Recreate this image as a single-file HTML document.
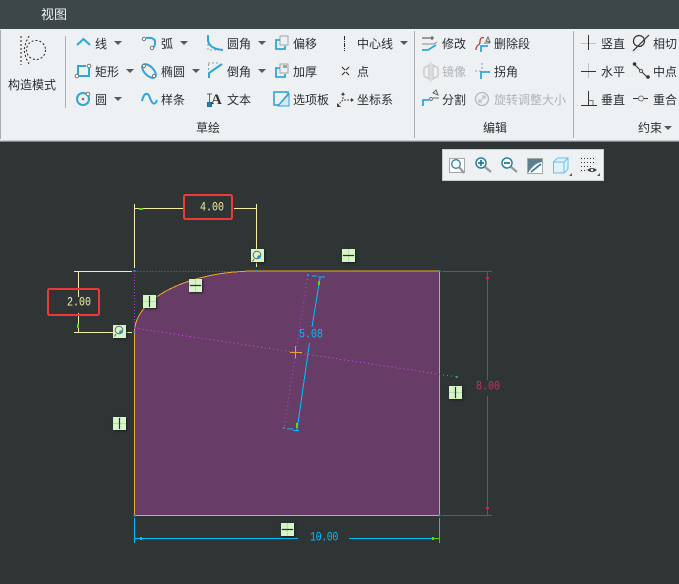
<!DOCTYPE html>
<html><head><meta charset="utf-8">
<style>
html,body{margin:0;padding:0;width:679px;height:584px;overflow:hidden;background:#2f3535}
body{position:relative;font-family:"Liberation Sans","Noto Sans CJK SC",sans-serif}
.t{position:absolute;font-size:12px;line-height:14px;color:#2b2f31;white-space:nowrap;letter-spacing:0}
.g{color:#b0b4b6}
svg{position:absolute;left:0;top:0}
.tag{position:absolute;width:13px;height:13px;background:#d6f6c8;box-shadow:1px 1px 2px #1a1f1f}
.d{font-family:"Liberation Mono",monospace;font-size:10px;letter-spacing:0;transform:scaleY(1.3);transform-origin:left center}
</style></head><body>
<div style="position:absolute;left:0;top:0;width:679px;height:29px;background:#3d4648"></div>
<div style="position:absolute;left:0;top:29px;width:679px;height:112px;background:#eef1f3"></div>
<div style="position:absolute;left:0;top:141px;width:679px;height:1px;background:#80888a"></div>
<div class="t" style="left:41px;top:8px;font-size:13px;color:#f2f4f4">视图</div>

<div class="t" style="left:8px;top:78px">构造模式</div>
<div class="t" style="left:95px;top:37px">线</div>
<div class="t" style="left:95px;top:65px">矩形</div>
<div class="t" style="left:95px;top:93px">圆</div>
<div class="t" style="left:161px;top:37px">弧</div>
<div class="t" style="left:161px;top:65px">椭圆</div>
<div class="t" style="left:161px;top:93px">样条</div>
<div class="t" style="left:227px;top:37px">圆角</div>
<div class="t" style="left:227px;top:65px">倒角</div>
<div class="t" style="left:227px;top:93px">文本</div>
<div class="t" style="left:293px;top:37px">偏移</div>
<div class="t" style="left:293px;top:65px">加厚</div>
<div class="t" style="left:293px;top:93px">选项板</div>
<div class="t" style="left:357px;top:37px">中心线</div>
<div class="t" style="left:357px;top:65px">点</div>
<div class="t" style="left:357px;top:93px">坐标系</div>
<div class="t" style="left:442px;top:37px">修改</div>
<div class="t g" style="left:442px;top:65px">镜像</div>
<div class="t" style="left:442px;top:93px">分割</div>
<div class="t" style="left:494px;top:37px">删除段</div>
<div class="t" style="left:494px;top:65px">拐角</div>
<div class="t g" style="left:494px;top:93px">旋转调整大小</div>
<div class="t" style="left:601px;top:37px">竖直</div>
<div class="t" style="left:601px;top:65px">水平</div>
<div class="t" style="left:601px;top:93px">垂直</div>
<div class="t" style="left:653px;top:37px">相切</div>
<div class="t" style="left:653px;top:65px">中点</div>
<div class="t" style="left:653px;top:93px">重合</div>
<div class="t" style="left:196px;top:121px">草绘</div>
<div class="t" style="left:483px;top:121px">编辑</div>
<div class="t" style="left:638px;top:121px">约束</div>

<div style="position:absolute;left:442px;top:149px;width:162px;height:32px;background:#eef1f3;box-shadow:inset 0 0 0 1px #c8cdcf"></div>

<svg width="679" height="584" viewBox="0 0 679 584" fill="none">
<!-- ribbon separators -->
<path d="M.5 30V139" stroke="#a8adaf"/>
<path d="M65.5 36V108M414.5 31V138M573.5 31V138" stroke="#a9aeb0"/>
<path d="M0 140.5H679" stroke="#c6cacc"/>
<!-- dropdown arrows -->
<g fill="#55595b">
<path d="M114 41h8l-4 4zM180 41h8l-4 4zM258 41h8l-4 4zM400 41h8l-4 4zM126 69h8l-4 4zM192 69h8l-4 4zM258 69h8l-4 4zM114 97h8l-4 4zM664 126h8l-4 4z"/>
</g>
<!-- construction mode -->
<path d="M21 36V65M29 36l-3 6-2 8 2 8 3 6" stroke="#222" stroke-dasharray="2 2"/>
<circle cx="36" cy="50" r="9.500" stroke="#222" stroke-dasharray="2 2"/>
<!-- line -->
<path d="M77 45l6.500-6 6.500 6" stroke="#2ea6dc" stroke-width="2"/>
<!-- rectangle -->
<path d="M86 66H78V76H89V68" stroke="#2ea6dc" stroke-width="2"/>
<circle cx="89" cy="66" r="1.800" fill="#fff" stroke="#777"/><circle cx="77" cy="76" r="1.800" fill="#fff" stroke="#777"/>
<!-- circle -->
<circle cx="83" cy="99" r="6" stroke="#2ea6dc" stroke-width="2"/><circle cx="83" cy="99" r="1.300" fill="#777"/><circle cx="88" cy="94" r="1.800" fill="#fff" stroke="#777"/>
<!-- arc -->
<path d="M146 38c6-1 10 1 9 6s-2 2-3 4" stroke="#2ea6dc" stroke-width="2"/><circle cx="144" cy="39" r="1.700" fill="#fff" stroke="#777"/><circle cx="152" cy="48" r="1.700" fill="#fff" stroke="#777"/>
<!-- ellipse -->
<ellipse cx="149" cy="71" rx="8.500" ry="4.500" transform="rotate(45 149 71)" stroke="#2ea6dc" stroke-width="2"/>
<circle cx="144" cy="66" r="1.600" fill="#fff" stroke="#777"/><circle cx="154" cy="76" r="1.600" fill="#fff" stroke="#777"/>
<!-- spline -->
<path d="M142 101c2-9 6-9 8-3s5 8 7 2" stroke="#2ea6dc" stroke-width="2"/>
<!-- fillet -->
<path d="M208 35V41q2 8 15 9" stroke="#2ea6dc" stroke-width="2"/><path d="M208 44v6h12" stroke="#999" stroke-dasharray="2 2"/>
<!-- chamfer -->
<path d="M208 63h10" stroke="#999" stroke-dasharray="2 2"/><path d="M208.500 64v6" stroke="#999" stroke-dasharray="2 2"/><path d="M209 78v-5l13-9" stroke="#2ea6dc" stroke-width="2"/>
<!-- text icon -->
<rect x="207.500" y="102.500" width="4" height="4" fill="#2e7fa8" stroke="#1c6f96"/><path d="M207 94h5M209.500 94v8" stroke="#666"/>
<text x="211" y="104" font-family="Liberation Serif,serif" font-size="15" font-weight="bold" fill="#333">A</text>
<!-- offset -->
<path d="M280 36h8v9h-8z" stroke="#a0a4a6"/><path d="M280 40h-4v9h9v-3" stroke="#2ea6dc" stroke-width="1.800"/>
<!-- thicken -->
<path d="M280 64h8v9h-8z" stroke="#a0a4a6"/><path d="M283 68h4v-3h-4z" fill="#a0a4a6"/><path d="M280 68h-4v9h9v-3" stroke="#2ea6dc" stroke-width="1.800"/>
<!-- palette -->
<rect x="274" y="92" width="14" height="13" stroke="#2ea6dc" stroke-width="1.600"/><path d="M278 106l11-13" stroke="#2ea6dc" stroke-width="1.600"/><path d="M278 106H289V94z" fill="#d6e8f2" stroke="#2ea6dc"/>
<!-- centerline -->
<path d="M344.500 36V51" stroke="#222" stroke-dasharray="4 1 1 1"/>
<!-- point -->
<path d="M342 67l3 3M349 67l-3 3M342 75l3-3M349 75l-3-3" stroke="#222"/>
<!-- coord -->
<path d="M343 94v6M344 100h7M343 100l-6 6" stroke="#444" stroke-dasharray="2 1"/><path d="M341 95l2-3 2 3zM351 98l3 2-3 2zM337 103v4h4z" fill="#444"/>
<!-- modify -->
<path d="M422 38h12M432 36v4" stroke="#444"/><path d="M422 44h12l3-2" stroke="#888"/><path d="M422 50h6l8-5" stroke="#2ea6dc" stroke-width="1.800"/>
<!-- mirror -->
<path d="M424 68l5-3v14l-5-3zM438 68l-5-3v14l5-3z" stroke="#c8cbcd" stroke-width="1.400"/><path d="M431 62v20" stroke="#c8cbcd"/>
<!-- split -->
<path d="M423 106v-6h6" stroke="#2ea6dc" stroke-width="1.800"/><path d="M433 98h6M433 93l3-3 2 5z" stroke="#666"/><circle cx="431" cy="99" r="1.500" stroke="#777"/>
<!-- delete segment -->
<path d="M476 50c0-6 4-4 4-8s2-5 4-4" stroke="#a8463c" stroke-width="1.300"/><path d="M481 52v-6h7" stroke="#2ea6dc" stroke-width="1.800"/><path d="M486 41l2-4 2 5z" stroke="#666"/><path d="M484 43h6" stroke="#666"/>
<!-- corner -->
<path d="M475 71h7M482 63v7" stroke="#999" stroke-dasharray="2 2"/><path d="M481 79v-7h9" stroke="#2ea6dc" stroke-width="1.800"/>
<!-- resize -->
<circle cx="482" cy="99" r="6.500" stroke="#b5b9bb" stroke-width="1.300"/><path d="M479 102l6-6M482 96h3v3M479 99v3h3" stroke="#b5b9bb"/>
<!-- vertical -->
<path d="M581 43.500H596" stroke="#bcc0c2"/><path d="M588.500 35V50" stroke="#333"/>
<!-- horizontal -->
<path d="M588.500 63V78" stroke="#bcc0c2"/><path d="M581 71.500H596" stroke="#333"/>
<!-- perpendicular -->
<path d="M581 105.500H597M588.500 91V105" stroke="#333"/><path d="M588.500 100.500H593V105" stroke="#777"/>
<!-- tangent -->
<circle cx="639" cy="41" r="5.500" stroke="#333" stroke-width="1.200"/><path d="M633 51l16-16" stroke="#333" stroke-width="1.200"/>
<!-- midpoint -->
<path d="M634 64l14 14" stroke="#333"/><circle cx="634.500" cy="64" r="1.800" fill="#333"/><circle cx="648" cy="77" r="1.800" fill="#333"/><circle cx="641" cy="71" r="1.600" fill="#eee" stroke="#555"/>
<!-- coincident -->
<path d="M633 98.500H638M644 98.500H648" stroke="#333"/><circle cx="641" cy="98.500" r="2.500" stroke="#777"/>

<!-- floating toolbar icons -->
<rect x="449.500" y="158.500" width="15" height="14" fill="#fff" stroke="#a5a9ab"/>
<circle cx="456" cy="164" r="4.300" stroke="#2d7f9f" stroke-width="1.300"/><path d="M459 167l5 6" stroke="#999" stroke-width="2.200"/>
<circle cx="481" cy="163" r="5" fill="#fff" stroke="#2d7f9f" stroke-width="1.500"/><path d="M478 163h6M481 160v6" stroke="#1d7aa0" stroke-width="1.800"/><path d="M485 167l6 5" stroke="#999" stroke-width="2.200"/>
<circle cx="507" cy="163" r="5" fill="#fff" stroke="#2d7f9f" stroke-width="1.500"/><path d="M504 163h6" stroke="#1d7aa0" stroke-width="1.800"/><path d="M511 167l6 5" stroke="#999" stroke-width="2.200"/>
<rect x="527.500" y="158.500" width="15" height="15" fill="#fff" stroke="#a5a9ab"/><path d="M528 159h14v3q-8 1-14 11z" fill="#5f7f8f"/><path d="M531 172l10-8" stroke="#1d7aa0" stroke-width="1.600"/>
<path d="M553.500 162l4-4h10.500v11l-4 4h-10.500z" fill="#dff3fc" stroke="#66c0e6"/><path d="M553.500 162h10.500v11M564 162l4-4" stroke="#66c0e6"/>
<path d="M569 176h3v-3zM597 176h3v-3z" fill="#555"/>
<path d="M581 158.500h15M581 162.500h15M581 166.500h10M581 170.500h6" stroke="#333" stroke-dasharray="1 2"/>
<path d="M587 170q5-4 10 0q-5 4-10 0z" fill="#444"/><circle cx="592" cy="170" r="1.200" fill="#fff"/>

<g shape-rendering="crispEdges">
<!-- sketch fill -->
<path d="M134.500 332A121.500 61 0 0 1 256 271H439.500V515.500H134.500Z" fill="#673c66"/>
<path d="M134.500 515.500V332A121.500 61 0 0 1 256 271H439.500V515.500H134.500" stroke="#f0a828"/>
<!-- dotted -->
<path d="M134.500 271.500H240M134.500 271V330" stroke="#c030e8" stroke-dasharray="1 2"/>
<path d="M134.500 328L457 377" stroke="#c84ce0" stroke-dasharray="1 3"/>
<path d="M308 275L284 428" stroke="#b04cd0" stroke-dasharray="1 3"/>
<!-- center cross -->
<path d="M290 352.500H302M295.500 346V358" stroke="#f0a030"/>
<!-- 4.00 dim -->
<path d="M134.500 204V268M256.500 204V249M256.500 262V267M134 208.500H184M234 208.500H257" stroke="#f2eeaa"/>
<rect x="139" y="208" width="4" height="2" fill="#55e000"/>
<!-- 2.00 dim -->
<path d="M74 271.500H132M74 332.500H113M126 332.500H132M78.500 271V297M78.500 313V332" stroke="#f2eeaa"/>
<rect x="77" y="324" width="2" height="4" fill="#55e000"/>
<!-- 5.08 dim -->
<path d="M312 276H317M318 277H325M320 278L312 327M309.500 343L297 430M287 429H293M293 430.500H299" stroke="#00bfff"/>
<path d="M319 281V285M297 423V428" stroke="#55e000" stroke-width="2"/>
<!-- 8.00 dim -->
<path d="M442 271.500H492M442 515.500H492M487.500 271V380M487.500 396V515" stroke="#a83468"/>
<rect x="486" y="277" width="3" height="2" fill="#d0206a"/><rect x="486" y="507" width="3" height="2" fill="#d0206a"/>
<!-- 10.00 dim -->
<path d="M134.500 518V543M439.500 518V543M134 538.500H298M349 538.500H439" stroke="#00bfff"/>
<path d="M433 538.500H439" stroke="#55e000"/><rect x="432" y="537" width="2" height="3" fill="#55e000"/><rect x="140" y="537" width="2" height="3" fill="#00bfff"/>
<!-- endpoint squares -->
<g fill="#2e8fc0"><rect x="133.500" y="270" width="2" height="2"/><rect x="255.500" y="270" width="2" height="2"/><rect x="438.500" y="270" width="2" height="2"/><rect x="133.500" y="331" width="2" height="2"/><rect x="133.500" y="514.500" width="2" height="2"/><rect x="438.500" y="514.500" width="2" height="2"/><rect x="307" y="274" width="2" height="2"/><rect x="283" y="427" width="2" height="2"/><rect x="456" y="376" width="2" height="2"/></g>
</g>
<!-- red boxes -->
<rect x="184" y="195" width="48" height="24" rx="1.500" stroke="#ee3838" stroke-width="2"/>
<rect x="48" y="289" width="51" height="26" rx="1.500" stroke="#ee3838" stroke-width="2"/>
</svg>

<div class="t d" style="left:200px;top:202px;color:#f2eeaa">4.00</div>
<div class="t d" style="left:67px;top:297px;color:#f2eeaa">2.00</div>
<div class="t d" style="left:299px;top:329px;color:#00bfff">5.08</div>
<div class="t d" style="left:476px;top:381px;color:#c8306e">8.00</div>
<div class="t d" style="left:310px;top:532px;color:#00bfff;letter-spacing:-.4px">10.00</div>

<div class="tag" style="left:143px;top:295px"></div>
<div class="tag" style="left:189px;top:279px"></div>
<div class="tag" style="left:342px;top:249px"></div>
<div class="tag" style="left:449px;top:386px"></div>
<div class="tag" style="left:113px;top:417px"></div>
<div class="tag" style="left:281px;top:523px"></div>
<div class="tag" style="left:251px;top:249px"></div>
<div class="tag" style="left:113px;top:325px"></div>

<svg width="679" height="584" viewBox="0 0 679 584" fill="none" style="z-index:2">
<path d="M149.500 295V308M143 301.500H156M195.500 279V292M189 285.500H202M348.500 249V262M342 255.500H355M455.500 386V399M449 392.500H462M119.500 417V430M113 423.500H126M287.500 523V536M281 529.500H294" stroke="#bcdcac"/>
<path d="M149.500 296V307M190 285.500H201M343 255.500H354M455.500 387V398M119.500 418V429M282 529.500H293" stroke="#2a3030" stroke-width="1.200"/>
<circle cx="257" cy="255" r="3.800" stroke="#666"/><path d="M254 259l-1.500 2.500" stroke="#666"/><circle cx="259" cy="257" r="1.800" fill="#2e8fc0"/>
<circle cx="119" cy="330" r="3.800" stroke="#666"/><path d="M116 334l-1.500 2.500" stroke="#666"/><circle cx="121" cy="332" r="1.800" fill="#2e8fc0"/>
</svg>
</body></html>
